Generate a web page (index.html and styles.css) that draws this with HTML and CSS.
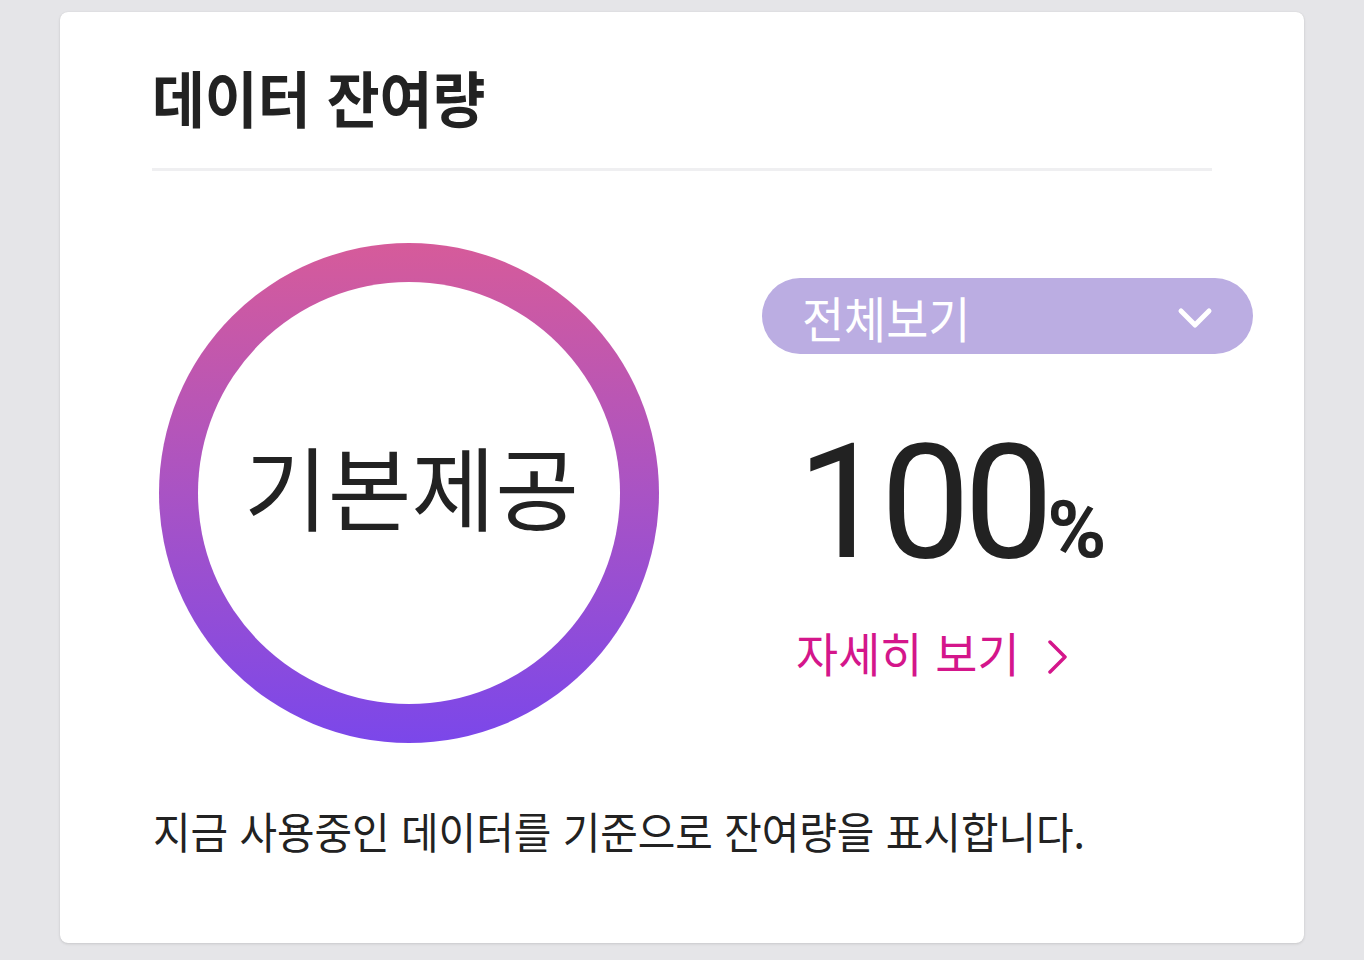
FILE: index.html
```html
<!DOCTYPE html>
<html lang="ko">
<head>
<meta charset="utf-8">
<title>데이터 잔여량</title>
<link rel="stylesheet" href="styles.css">
</head>
<body>
<main class="page">
  <section class="card">
    <header class="card-head">
      <h1 class="card-title"><span class="squeeze">데이터 잔여량</span></h1>
    </header>
    <div class="summary">
      <div class="ring">
        <div class="ring-inner">
          <span class="ring-label">기본제공</span>
        </div>
      </div>
      <div class="status">
        <button class="select" type="button">
          <span class="select-label">전체보기</span>
          <svg class="select-chevron" width="36" height="30" viewBox="0 0 36 30" aria-hidden="true">
            <path d="M4 10 L18 24 L32 10" fill="none" stroke="#ffffff" stroke-width="5" stroke-linecap="round" stroke-linejoin="round"/>
          </svg>
        </button>
        <p class="percent"><span class="num">100</span><span class="unit">%</span></p>
        <a class="detail" href="#">
          <span class="detail-label">자세히 보기</span>
          <svg class="detail-chevron" width="20" height="36" viewBox="0 0 20 36" aria-hidden="true">
            <path d="M3 3 L18 18 L3 33" fill="none" stroke="#d4168b" stroke-width="3.5" stroke-linecap="round" stroke-linejoin="round"/>
          </svg>
        </a>
      </div>
    </div>
    <p class="note"><span class="note-text">지금 사용중인 데이터를 기준으로 잔여량을 표시합니다.</span></p>
  </section>
</main>
</body>
</html>
```

FILE: styles.css
```css
* {
  box-sizing: border-box;
}

html,
body {
  margin: 0;
  padding: 0;
}

body {
  background: #e5e5e8;
  font-family: "Noto Sans CJK KR", "Noto Sans", sans-serif;
  color: #222222;
}

.page {
  height: 960px;
  padding: 12px 0 0 60px;
  overflow: hidden;
}

.card {
  width: 1244px;
  height: 931px;
  background: #ffffff;
  border-radius: 8px;
  box-shadow: 0 1px 3px rgba(0, 0, 0, 0.12), 0 0 1px rgba(0, 0, 0, 0.1);
}

.card-head {
  margin: 0 92px;
  padding: 54px 0 41px;
  border-bottom: 3px solid #efeff1;
}

.card-title {
  margin: 0;
  font-size: 61px;
  line-height: 1;
  font-weight: 700;
  color: #222222;
  white-space: nowrap;
}

.squeeze {
  display: inline-block;
  transform: scaleX(0.942);
  transform-origin: left center;
}

.summary {
  display: flex;
  align-items: flex-start;
  gap: 103px;
  padding: 72px 0 0 99px;
}

.ring {
  flex: none;
  width: 500px;
  height: 500px;
  padding: 39px;
  border-radius: 50%;
  background: linear-gradient(180deg, #d65b9a 0%, #a953c4 50%, #7b47ea 100%);
}

.ring-inner {
  width: 100%;
  height: 100%;
  border-radius: 50%;
  background: #ffffff;
  display: flex;
  align-items: center;
  justify-content: center;
}

.ring-label {
  display: inline-block;
  font-size: 91px;
  line-height: 1;
  font-weight: 400;
  color: #222222;
  white-space: nowrap;
  margin: 0 0 18px 5px;
}

.status {
  flex: none;
  width: 491px;
  padding-top: 35px;
  display: flex;
  flex-direction: column;
  align-items: flex-start;
}

.select {
  width: 491px;
  height: 76px;
  border: none;
  border-radius: 38px;
  background: #bbade2;
  padding: 0 40px 0 40px;
  display: flex;
  align-items: center;
  justify-content: space-between;
  font-family: inherit;
  cursor: pointer;
}

.select-label {
  display: inline-block;
  font-size: 49px;
  line-height: 1;
  color: #ffffff;
  white-space: nowrap;
  transform: scaleX(0.934);
  transform-origin: left center;
}

.select-chevron {
  display: block;
  flex: none;
}

.percent {
  margin: 69px 0 0 35px;
  font-family: Roboto, "Liberation Sans", sans-serif;
  font-size: 160px;
  line-height: 1;
  font-weight: 400;
  letter-spacing: -6.5px;
  color: #222222;
  white-space: nowrap;
}

.unit {
  font-size: 80px;
  font-weight: 700;
  letter-spacing: 0;
}

.detail {
  margin: 44px 0 0 34px;
  display: flex;
  align-items: center;
  color: #d4168b;
  text-decoration: none;
}

.detail-label {
  display: inline-block;
  font-size: 47px;
  line-height: 1;
  white-space: nowrap;
  transform: scaleX(0.975);
  transform-origin: left center;
}

.detail-chevron {
  display: block;
  flex: none;
  margin: 12px 0 0 22px;
}

.note {
  margin: 66px 0 0 93px;
  font-size: 43.5px;
  line-height: 1;
  color: #222222;
  white-space: nowrap;
}

.note-text {
  display: inline-block;
  transform: scaleX(0.938);
  transform-origin: left center;
}
```
